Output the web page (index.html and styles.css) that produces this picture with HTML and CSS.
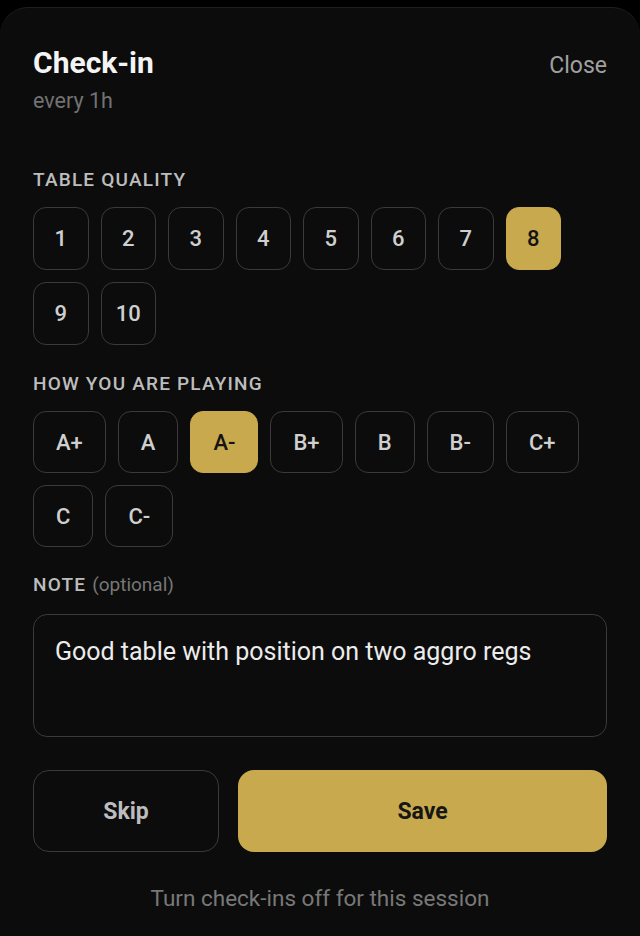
FILE: index.html
```html
<!DOCTYPE html>
<html lang="en">
<head>
  <meta charset="UTF-8" />
  <meta name="viewport" content="width=device-width, initial-scale=1.0" />
  <title>Check-in</title>
  <link rel="stylesheet" href="styles.css">
</head>
<body>
  <div class="sheet">
    <div class="sheet-head">
      <div>
        <h1>Check-in</h1>
        <p class="interval">every 1h</p>
      </div>
      <button class="close">Close</button>
    </div>

    <h2 class="label">TABLE QUALITY</h2>
    <div class="chips">
      <button class="chip num">1</button>
      <button class="chip num">2</button>
      <button class="chip num">3</button>
      <button class="chip num">4</button>
      <button class="chip num">5</button>
      <button class="chip num">6</button>
      <button class="chip num">7</button>
      <button class="chip num active">8</button>
      <button class="chip num">9</button>
      <button class="chip num">10</button>
    </div>

    <h2 class="label">HOW YOU ARE PLAYING</h2>
    <div class="chips">
      <button class="chip grade">A+</button>
      <button class="chip grade">A</button>
      <button class="chip grade active">A-</button>
      <button class="chip grade">B+</button>
      <button class="chip grade">B</button>
      <button class="chip grade">B-</button>
      <button class="chip grade">C+</button>
      <button class="chip grade">C</button>
      <button class="chip grade">C-</button>
    </div>

    <h2 class="label note-label">NOTE <span class="opt">(optional)</span></h2>
    <textarea class="note">Good table with position on two aggro regs</textarea>

    <div class="actions">
      <button class="btn skip">Skip</button>
      <button class="btn save">Save</button>
    </div>

    <p class="turn-off">Turn check-ins off for this session</p>
  </div>
</body>
</html>
```

FILE: styles.css
```css
* { box-sizing: border-box; }
html, body {
  margin: 0; height: 100%;
  background: #000;
  font-family: Roboto, 'Noto Sans', sans-serif;
}
body { padding-top: 7px; }
button, textarea { font-family: inherit; }

.sheet {
  min-height: 100%;
  background: #0c0c0c;
  border-top: 1px solid #1f1f1f;
  border-radius: 28px 28px 0 0;
  padding: 37px 33px 0;
}
.sheet-head {
  display: flex; justify-content: space-between; align-items: baseline;
}
h1 {
  margin: 0; font-size: 30px; line-height: 36px;
  font-weight: 700; color: #f4f4f4;
}
.interval {
  margin: 7px 0 0; font-size: 21.5px; line-height: 26px; color: #727272;
}
.close {
  background: none; border: none; padding: 0;
  font-size: 23px; line-height: 28px; color: #a0a0a0; cursor: pointer;
}

.label {
  margin: 54px 0 15px; font-size: 19px; line-height: 24px;
  font-weight: 500; letter-spacing: 1.2px; color: #bdbdbd;
}
.label .opt { font-weight: 400; letter-spacing: 0; color: #777; }

.chips { display: flex; flex-wrap: wrap; gap: 12px; }
.chips + .label { margin-top: 27px; }
.chips + .note-label { margin-top: 26px; margin-bottom: 17px; }
.chip {
  height: 63px; padding: 0;
  background: #0c0c0c; color: #cfcfcf;
  border: 1.5px solid #3a3a3a; border-radius: 13px;
  font-size: 22px; font-weight: 500; cursor: pointer;
}
.chip.num { width: 55.5px; }
.chip.grade { height: 62px; padding: 0 22px; min-width: 60px; }
.chip.active {
  background: #c9a94d; border-color: #c9a94d; color: #141414;
}

.note {
  display: block; width: 100%; height: 123px; resize: none;
  background: #0c0c0c; color: #ececec;
  border: 1.5px solid #3a3a3a; border-radius: 14px;
  padding: 22px 21px; font-size: 25px; line-height: 30px; outline: none;
}

.actions { display: flex; gap: 19px; margin-top: 33px; }
.btn {
  height: 82px; border-radius: 16px; font-size: 23px; font-weight: 700;
  cursor: pointer;
}
.skip {
  width: 186px; background: #0c0c0c; color: #bdbdbd;
  border: 1.5px solid #3a3a3a;
}
.save {
  flex: 1; background: #c9a94d; color: #161616; border: none;
}

.turn-off {
  margin: 32px 0 0; text-align: center;
  font-size: 22.5px; line-height: 28px; color: #787878;
}
```
